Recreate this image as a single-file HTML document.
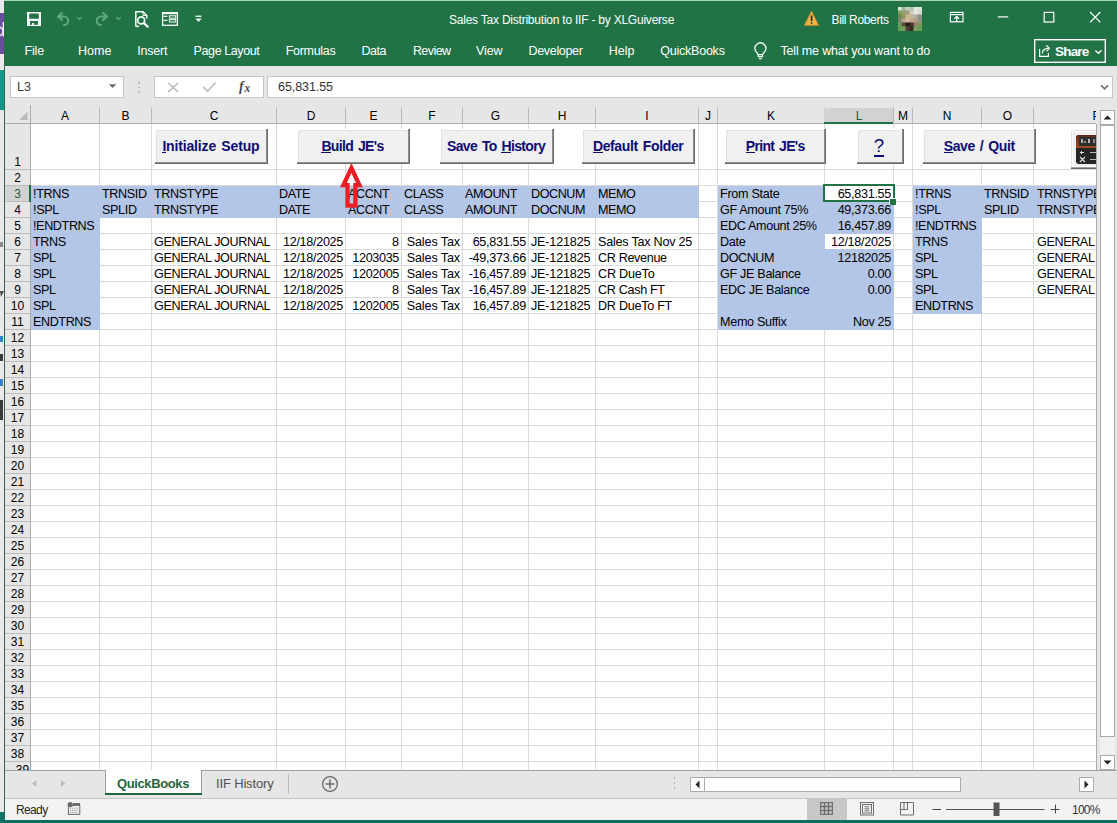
<!DOCTYPE html><html><head><meta charset="utf-8"><style>
html,body{margin:0;padding:0;}
body{width:1117px;height:823px;overflow:hidden;position:relative;background:#e6e6e6;font-family:"Liberation Sans",sans-serif;}
body div, body svg{position:absolute;}
.t{white-space:pre;}
</style></head><body>
<div style="left:0px;top:0px;width:4px;height:823px;background:#e9e9e9;"></div>
<div style="left:0px;top:13px;width:4px;height:41px;background:#6a4f9c;"></div>
<div style="left:0px;top:70px;width:4px;height:40px;background:#12978a;"></div>
<div style="left:0px;top:812px;width:4px;height:11px;background:#0e7566;"></div>
<svg style="left:0;top:13px" width="4" height="41" viewBox="0 13 4 41"><circle cx="-1.2" cy="31.5" r="4.3" fill="none" stroke="#f0ecf6" stroke-width="1.6"/><path d="M3.3 22 V36.5" stroke="#f0ecf6" stroke-width="1.4"/></svg>
<div style="left:0px;top:242px;width:3px;height:5px;background:#8c8c8c;"></div>
<svg style="left:0;top:288px" width="4" height="10" viewBox="0 288 4 10"><path d="M0 291 H4 L1 297 Z" fill="#4a4a4a"/></svg>
<div style="left:0px;top:336px;width:3px;height:6px;background:#3b82c4;"></div>
<div style="left:0px;top:354px;width:3px;height:7px;background:#3a3a3a;"></div>
<div style="left:0px;top:379px;width:3px;height:7px;background:#3b82c4;"></div>
<div style="left:0px;top:400px;width:3px;height:20px;background:#3a3a3a;"></div>
<div style="left:4px;top:0px;width:1113px;height:1px;background:#a9d6b8;"></div>
<div style="left:4px;top:1px;width:1113px;height:65px;background:#217346;"></div>
<div style="left:4px;top:1px;width:1px;height:820px;background:#2d6847;"></div>
<div style="left:5px;top:66px;width:1112px;height:39px;background:#e6e6e6;"></div>
<svg style="left:0;top:0" width="220" height="34" viewBox="0 0 220 34">
<rect x="27" y="12" width="14" height="14" fill="#f4fbf6"/>
<rect x="29.2" y="13.4" width="9.6" height="5.4" rx="0.6" fill="#217346"/>
<rect x="30" y="21" width="8" height="3.8" fill="#217346"/>
<rect x="32" y="23" width="2.1" height="1.8" fill="#f4fbf6"/>
<g fill="none" stroke="#5ea97c" stroke-width="2.1" stroke-linecap="round" stroke-linejoin="round">
<path d="M58 16.5 L62 13 M58 16.5 L62 20 M58 16.5 H64 A4.2 4.2 0 0 1 64 25"/>
<path d="M77.5 17.5 L79.5 19.5 L81.5 17.5" stroke-width="1.1"/>
<path d="M107 16.5 L103 13 M107 16.5 L103 20 M107 16.5 H101 A4.2 4.2 0 0 0 101 25"/>
<path d="M116.5 17.5 L118.5 19.5 L120.5 17.5" stroke-width="1.1"/>
</g>
<g fill="none" stroke="#f4fbf6" stroke-width="1.3">
<path d="M135.8 26.4 V11.7 H143 L146.8 15.5 V18.6" stroke-width="1.5"/>
<path d="M143 11.7 V15.5 H146.8" stroke-width="1"/>
<circle cx="141.2" cy="20.4" r="3.5" stroke-width="1.7"/>
<path d="M135.8 26.4 H139" stroke-width="1.5"/>
<path d="M143.8 23 L147.6 26.6" stroke-width="2.4" stroke-linecap="round"/>
<rect x="162.6" y="12.7" width="14.8" height="12.6"/>
<path d="M163.5 16.3 H167.4 M163.5 20.4 H167.4" stroke-width="1.2"/>
<rect x="169.4" y="15.8" width="6.3" height="2.4" stroke-width="1"/>
<rect x="169.4" y="19.6" width="6.3" height="2.4" stroke-width="1"/>
</g>
<rect x="162" y="12" width="16" height="2.2" fill="#f4fbf6"/>
<rect x="195.5" y="15.6" width="6" height="1.3" fill="#f4fbf6"/>
<path d="M195.3 18.6 H201.7 L198.5 22 Z" fill="#f4fbf6"/>
</svg>
<div class="t" style="left:449.00px;top:13.84px;font-size:12px;line-height:12px;color:#ffffff;white-space:pre;letter-spacing:-0.225px;">Sales Tax Distribution to IIF - by XLGuiverse</div>
<div class="t" style="left:831.50px;top:13.84px;font-size:12px;line-height:12px;color:#ffffff;white-space:pre;letter-spacing:-0.347px;">Bill Roberts</div>
<svg style="left:800px;top:8px" width="24" height="22" viewBox="800 8 24 22">
<path d="M811.5 11.3 L818.6 25.3 H804.4 Z" fill="#f0b442" stroke="#c98a2c" stroke-width="1" stroke-linejoin="round"/>
<rect x="810.8" y="15.5" width="1.5" height="5.5" fill="#1a1a1a"/>
<rect x="810.8" y="22.2" width="1.5" height="1.5" fill="#1a1a1a"/>
</svg>
<svg style="left:898px;top:7px" width="24" height="24" viewBox="0 0 24 24"><defs><filter id="avb"><feGaussianBlur stdDeviation="0.7"/></filter></defs><g filter="url(#avb)"><rect x="-0.5" y="-0.5" width="5" height="5" fill="#d8e6d8"/><rect x="3.5" y="-0.5" width="5" height="5" fill="#a4b49a"/><rect x="7.5" y="-0.5" width="5" height="5" fill="#c8d0c0"/><rect x="11.5" y="-0.5" width="5" height="5" fill="#b8c0b0"/><rect x="15.5" y="-0.5" width="5" height="5" fill="#e0e8e0"/><rect x="19.5" y="-0.5" width="5" height="5" fill="#dce4dc"/><rect x="-0.5" y="3.5" width="5" height="5" fill="#7a9a60"/><rect x="3.5" y="3.5" width="5" height="5" fill="#90a070"/><rect x="7.5" y="3.5" width="5" height="5" fill="#a89878"/><rect x="11.5" y="3.5" width="5" height="5" fill="#c8ccc0"/><rect x="15.5" y="3.5" width="5" height="5" fill="#e4e8e0"/><rect x="19.5" y="3.5" width="5" height="5" fill="#d4dcd4"/><rect x="-0.5" y="7.5" width="5" height="5" fill="#6a8a50"/><rect x="3.5" y="7.5" width="5" height="5" fill="#8a9a60"/><rect x="7.5" y="7.5" width="5" height="5" fill="#c8b890"/><rect x="11.5" y="7.5" width="5" height="5" fill="#c4b494"/><rect x="15.5" y="7.5" width="5" height="5" fill="#b4aca4"/><rect x="19.5" y="7.5" width="5" height="5" fill="#8c9484"/><rect x="-0.5" y="11.5" width="5" height="5" fill="#788078"/><rect x="3.5" y="11.5" width="5" height="5" fill="#b8a088"/><rect x="7.5" y="11.5" width="5" height="5" fill="#d0b898"/><rect x="11.5" y="11.5" width="5" height="5" fill="#c0a890"/><rect x="15.5" y="11.5" width="5" height="5" fill="#b89888"/><rect x="19.5" y="11.5" width="5" height="5" fill="#909088"/><rect x="-0.5" y="15.5" width="5" height="5" fill="#70a060"/><rect x="3.5" y="15.5" width="5" height="5" fill="#5c4c3c"/><rect x="7.5" y="15.5" width="5" height="5" fill="#281c14"/><rect x="11.5" y="15.5" width="5" height="5" fill="#403020"/><rect x="15.5" y="15.5" width="5" height="5" fill="#a07870"/><rect x="19.5" y="15.5" width="5" height="5" fill="#70a050"/><rect x="-0.5" y="19.5" width="5" height="5" fill="#60a050"/><rect x="3.5" y="19.5" width="5" height="5" fill="#70a060"/><rect x="7.5" y="19.5" width="5" height="5" fill="#504030"/><rect x="11.5" y="19.5" width="5" height="5" fill="#342a22"/><rect x="15.5" y="19.5" width="5" height="5" fill="#80a060"/><rect x="19.5" y="19.5" width="5" height="5" fill="#60a050"/></g></svg>
<svg style="left:940px;top:0" width="177" height="34" viewBox="940 0 177 34">
<g fill="none" stroke="#ffffff" stroke-width="1.2">
<rect x="950.4" y="12.4" width="12.6" height="9.4"/>
<path d="M950.4 14.6 H963"/>
<path d="M956.7 22 V16.6 M954.3 18.8 L956.7 16.4 L959.1 18.8"/>
<path d="M997.8 16.9 H1008.2"/>
<rect x="1044.2" y="12.4" width="9.6" height="9.6"/>
<path d="M1090 12 L1100.4 22.4 M1100.4 12 L1090 22.4"/>
</g>
</svg>
<div class="t" style="left:24.60px;top:45.42px;font-size:12.5px;line-height:12.5px;color:#ffffff;white-space:pre;letter-spacing:-0.214px;">File</div>
<div class="t" style="left:77.90px;top:45.42px;font-size:12.5px;line-height:12.5px;color:#ffffff;white-space:pre;letter-spacing:0.039px;">Home</div>
<div class="t" style="left:137.30px;top:45.42px;font-size:12.5px;line-height:12.5px;color:#ffffff;white-space:pre;letter-spacing:-0.225px;">Insert</div>
<div class="t" style="left:193.60px;top:45.42px;font-size:12.5px;line-height:12.5px;color:#ffffff;white-space:pre;letter-spacing:-0.400px;">Page Layout</div>
<div class="t" style="left:285.80px;top:45.42px;font-size:12.5px;line-height:12.5px;color:#ffffff;white-space:pre;letter-spacing:-0.312px;">Formulas</div>
<div class="t" style="left:361.60px;top:45.42px;font-size:12.5px;line-height:12.5px;color:#ffffff;white-space:pre;letter-spacing:-0.502px;">Data</div>
<div class="t" style="left:412.90px;top:45.42px;font-size:12.5px;line-height:12.5px;color:#ffffff;white-space:pre;letter-spacing:-0.550px;">Review</div>
<div class="t" style="left:476.10px;top:45.42px;font-size:12.5px;line-height:12.5px;color:#ffffff;white-space:pre;letter-spacing:-0.173px;">View</div>
<div class="t" style="left:528.50px;top:45.42px;font-size:12.5px;line-height:12.5px;color:#ffffff;white-space:pre;letter-spacing:-0.320px;">Developer</div>
<div class="t" style="left:608.80px;top:45.42px;font-size:12.5px;line-height:12.5px;color:#ffffff;white-space:pre;letter-spacing:-0.055px;">Help</div>
<div class="t" style="left:660.20px;top:45.42px;font-size:12.5px;line-height:12.5px;color:#ffffff;white-space:pre;letter-spacing:-0.220px;">QuickBooks</div>
<div class="t" style="left:780.50px;top:45.42px;font-size:12.5px;line-height:12.5px;color:#ffffff;white-space:pre;letter-spacing:-0.175px;">Tell me what you want to do</div>
<svg style="left:748px;top:38px" width="24" height="24" viewBox="748 38 24 24">
<g fill="none" stroke="#f2fbf5" stroke-width="1.3">
<path d="M758.3 54.6 L755.8 51.2 A5.4 5.4 0 1 1 765 51.2 L762.5 54.6 Z"/>
<path d="M758.3 54.6 V56.6 H762.5 V54.6"/>
<path d="M759 58.6 H761.8"/>
</g>
</svg>
<svg style="left:1030px;top:36px" width="87" height="30" viewBox="1030 36 87 30">
<rect x="1034.7" y="39.7" width="70.6" height="22.6" fill="none" stroke="#ffffff" stroke-width="1.4"/>
<g fill="none" stroke="#ffffff" stroke-width="1.2">
<path d="M1039.6 49 V56.4 H1048.4 V53"/>
<path d="M1042.3 53.4 C1042.6 50.4 1044.6 48.4 1048 48.3"/>
<path d="M1046.2 45.4 L1049.4 48.3 L1046.4 51.3"/>
<path d="M1095.4 50.4 L1098.4 53.2 L1101.4 50.4" stroke-width="1.4"/>
</g>
</svg>
<div class="t" style="left:1055.00px;top:44.57px;font-size:13.5px;line-height:13.5px;color:#ffffff;white-space:pre;font-weight:bold;letter-spacing:-0.806px;">Share</div>
<div style="left:10px;top:76px;width:114px;height:22px;background:#ffffff;box-sizing:border-box;border:1px solid #c6c6c6;"></div>
<div class="t" style="left:17.00px;top:81.42px;font-size:12.5px;line-height:12.5px;color:#3c3c3c;white-space:pre;letter-spacing:0.047px;">L3</div>
<svg style="left:105px;top:80px" width="16" height="12" viewBox="105 80 16 12"><path d="M108.8 84.2 H116.4 L112.6 88 Z" fill="#707070"/></svg>
<div style="left:138.3px;top:82px;width:1.6px;height:1.6px;background:#ababab;border-radius:1px;"></div>
<div style="left:138.3px;top:86.5px;width:1.6px;height:1.6px;background:#ababab;border-radius:1px;"></div>
<div style="left:138.3px;top:91px;width:1.6px;height:1.6px;background:#ababab;border-radius:1px;"></div>
<div style="left:154px;top:76px;width:110px;height:22px;background:#ffffff;box-sizing:border-box;border:1px solid #c6c6c6;"></div>
<svg style="left:160px;top:78px" width="100" height="18" viewBox="160 78 100 18">
<path d="M168.2 83 L178.2 92 M178.2 83 L168.2 92" stroke="#b9b9b9" stroke-width="1.5" fill="none"/>
<path d="M203.4 87 L207.6 91.2 L215.6 82.6" stroke="#c4c4c4" stroke-width="1.9" fill="none"/>
</svg>
<svg style="left:236px;top:78px" width="20" height="18" viewBox="236 78 20 18"><text x="239" y="90.6" font-family="Liberation Serif" font-style="italic" font-weight="bold" font-size="14" fill="#4a4a4a">f</text><text x="244.6" y="92" font-family="Liberation Serif" font-style="italic" font-weight="bold" font-size="11.5" fill="#4a4a4a">x</text></svg>
<div style="left:267px;top:76px;width:846px;height:22px;background:#ffffff;box-sizing:border-box;border:1px solid #c6c6c6;"></div>
<div class="t" style="left:278.00px;top:81.42px;font-size:12.5px;line-height:12.5px;color:#333333;white-space:pre;letter-spacing:-0.068px;">65,831.55</div>
<svg style="left:1096px;top:80px" width="16" height="14" viewBox="1096 80 16 14"><path d="M1101.2 85.4 L1104.6 88.8 L1108 85.4" stroke="#707070" stroke-width="1.6" fill="none"/></svg>
<div style="left:31px;top:124px;width:1065px;height:646px;background:#ffffff;"></div>
<div style="left:5px;top:105px;width:1091px;height:18px;background:#e6e6e6;"></div>
<div style="left:5px;top:123px;width:1091px;height:1px;background:#ababab;"></div>
<svg style="left:17px;top:110px" width="12" height="12" viewBox="17 110 12 12"><path d="M27.5 111.8 V120 H19.3 Z" fill="#b8b8b8"/></svg>
<div style="left:5px;top:124px;width:25px;height:646px;background:#e6e6e6;"></div>
<div style="left:30px;top:105px;width:1px;height:665px;background:#ababab;"></div>
<div style="left:99px;top:106px;width:1px;height:17px;background:linear-gradient(#e6e6e6,#b8b8b8 16%,#b8b8b8)"></div>
<div style="left:151px;top:106px;width:1px;height:17px;background:linear-gradient(#e6e6e6,#b8b8b8 16%,#b8b8b8)"></div>
<div style="left:276px;top:106px;width:1px;height:17px;background:linear-gradient(#e6e6e6,#b8b8b8 16%,#b8b8b8)"></div>
<div style="left:345px;top:106px;width:1px;height:17px;background:linear-gradient(#e6e6e6,#b8b8b8 16%,#b8b8b8)"></div>
<div style="left:401px;top:106px;width:1px;height:17px;background:linear-gradient(#e6e6e6,#b8b8b8 16%,#b8b8b8)"></div>
<div style="left:462px;top:106px;width:1px;height:17px;background:linear-gradient(#e6e6e6,#b8b8b8 16%,#b8b8b8)"></div>
<div style="left:528px;top:106px;width:1px;height:17px;background:linear-gradient(#e6e6e6,#b8b8b8 16%,#b8b8b8)"></div>
<div style="left:595px;top:106px;width:1px;height:17px;background:linear-gradient(#e6e6e6,#b8b8b8 16%,#b8b8b8)"></div>
<div style="left:698px;top:106px;width:1px;height:17px;background:linear-gradient(#e6e6e6,#b8b8b8 16%,#b8b8b8)"></div>
<div style="left:717px;top:106px;width:1px;height:17px;background:linear-gradient(#e6e6e6,#b8b8b8 16%,#b8b8b8)"></div>
<div style="left:824px;top:106px;width:1px;height:17px;background:linear-gradient(#e6e6e6,#b8b8b8 16%,#b8b8b8)"></div>
<div style="left:893px;top:106px;width:1px;height:17px;background:linear-gradient(#e6e6e6,#b8b8b8 16%,#b8b8b8)"></div>
<div style="left:912px;top:106px;width:1px;height:17px;background:linear-gradient(#e6e6e6,#b8b8b8 16%,#b8b8b8)"></div>
<div style="left:981px;top:106px;width:1px;height:17px;background:linear-gradient(#e6e6e6,#b8b8b8 16%,#b8b8b8)"></div>
<div style="left:1033px;top:106px;width:1px;height:17px;background:linear-gradient(#e6e6e6,#b8b8b8 16%,#b8b8b8)"></div>
<div style="left:824px;top:108px;width:69px;height:15px;background:#d2d2d2;"></div>
<div style="left:824px;top:122px;width:69px;height:2px;background:#217346;"></div>
<div style="left:99px;top:124px;width:1px;height:646px;background:#dadada;"></div>
<div style="left:151px;top:124px;width:1px;height:646px;background:#dadada;"></div>
<div style="left:276px;top:124px;width:1px;height:646px;background:#dadada;"></div>
<div style="left:345px;top:124px;width:1px;height:646px;background:#dadada;"></div>
<div style="left:401px;top:124px;width:1px;height:646px;background:#dadada;"></div>
<div style="left:462px;top:124px;width:1px;height:646px;background:#dadada;"></div>
<div style="left:528px;top:124px;width:1px;height:646px;background:#dadada;"></div>
<div style="left:595px;top:124px;width:1px;height:646px;background:#dadada;"></div>
<div style="left:698px;top:124px;width:1px;height:646px;background:#dadada;"></div>
<div style="left:717px;top:124px;width:1px;height:646px;background:#dadada;"></div>
<div style="left:824px;top:124px;width:1px;height:646px;background:#dadada;"></div>
<div style="left:893px;top:124px;width:1px;height:646px;background:#dadada;"></div>
<div style="left:912px;top:124px;width:1px;height:646px;background:#dadada;"></div>
<div style="left:981px;top:124px;width:1px;height:646px;background:#dadada;"></div>
<div style="left:1033px;top:124px;width:1px;height:646px;background:#dadada;"></div>
<div style="left:31px;top:169px;width:1065px;height:1px;background:#dadada;"></div>
<div style="left:5px;top:169px;width:25px;height:1px;background:#bdbdbd;"></div>
<div style="left:31px;top:185px;width:1065px;height:1px;background:#dadada;"></div>
<div style="left:5px;top:185px;width:25px;height:1px;background:#bdbdbd;"></div>
<div style="left:31px;top:201px;width:1065px;height:1px;background:#dadada;"></div>
<div style="left:5px;top:201px;width:25px;height:1px;background:#bdbdbd;"></div>
<div style="left:31px;top:217px;width:1065px;height:1px;background:#dadada;"></div>
<div style="left:5px;top:217px;width:25px;height:1px;background:#bdbdbd;"></div>
<div style="left:31px;top:233px;width:1065px;height:1px;background:#dadada;"></div>
<div style="left:5px;top:233px;width:25px;height:1px;background:#bdbdbd;"></div>
<div style="left:31px;top:249px;width:1065px;height:1px;background:#dadada;"></div>
<div style="left:5px;top:249px;width:25px;height:1px;background:#bdbdbd;"></div>
<div style="left:31px;top:265px;width:1065px;height:1px;background:#dadada;"></div>
<div style="left:5px;top:265px;width:25px;height:1px;background:#bdbdbd;"></div>
<div style="left:31px;top:281px;width:1065px;height:1px;background:#dadada;"></div>
<div style="left:5px;top:281px;width:25px;height:1px;background:#bdbdbd;"></div>
<div style="left:31px;top:297px;width:1065px;height:1px;background:#dadada;"></div>
<div style="left:5px;top:297px;width:25px;height:1px;background:#bdbdbd;"></div>
<div style="left:31px;top:313px;width:1065px;height:1px;background:#dadada;"></div>
<div style="left:5px;top:313px;width:25px;height:1px;background:#bdbdbd;"></div>
<div style="left:31px;top:329px;width:1065px;height:1px;background:#dadada;"></div>
<div style="left:5px;top:329px;width:25px;height:1px;background:#bdbdbd;"></div>
<div style="left:31px;top:345px;width:1065px;height:1px;background:#dadada;"></div>
<div style="left:5px;top:345px;width:25px;height:1px;background:#bdbdbd;"></div>
<div style="left:31px;top:361px;width:1065px;height:1px;background:#dadada;"></div>
<div style="left:5px;top:361px;width:25px;height:1px;background:#bdbdbd;"></div>
<div style="left:31px;top:377px;width:1065px;height:1px;background:#dadada;"></div>
<div style="left:5px;top:377px;width:25px;height:1px;background:#bdbdbd;"></div>
<div style="left:31px;top:393px;width:1065px;height:1px;background:#dadada;"></div>
<div style="left:5px;top:393px;width:25px;height:1px;background:#bdbdbd;"></div>
<div style="left:31px;top:409px;width:1065px;height:1px;background:#dadada;"></div>
<div style="left:5px;top:409px;width:25px;height:1px;background:#bdbdbd;"></div>
<div style="left:31px;top:425px;width:1065px;height:1px;background:#dadada;"></div>
<div style="left:5px;top:425px;width:25px;height:1px;background:#bdbdbd;"></div>
<div style="left:31px;top:441px;width:1065px;height:1px;background:#dadada;"></div>
<div style="left:5px;top:441px;width:25px;height:1px;background:#bdbdbd;"></div>
<div style="left:31px;top:457px;width:1065px;height:1px;background:#dadada;"></div>
<div style="left:5px;top:457px;width:25px;height:1px;background:#bdbdbd;"></div>
<div style="left:31px;top:473px;width:1065px;height:1px;background:#dadada;"></div>
<div style="left:5px;top:473px;width:25px;height:1px;background:#bdbdbd;"></div>
<div style="left:31px;top:489px;width:1065px;height:1px;background:#dadada;"></div>
<div style="left:5px;top:489px;width:25px;height:1px;background:#bdbdbd;"></div>
<div style="left:31px;top:505px;width:1065px;height:1px;background:#dadada;"></div>
<div style="left:5px;top:505px;width:25px;height:1px;background:#bdbdbd;"></div>
<div style="left:31px;top:521px;width:1065px;height:1px;background:#dadada;"></div>
<div style="left:5px;top:521px;width:25px;height:1px;background:#bdbdbd;"></div>
<div style="left:31px;top:537px;width:1065px;height:1px;background:#dadada;"></div>
<div style="left:5px;top:537px;width:25px;height:1px;background:#bdbdbd;"></div>
<div style="left:31px;top:553px;width:1065px;height:1px;background:#dadada;"></div>
<div style="left:5px;top:553px;width:25px;height:1px;background:#bdbdbd;"></div>
<div style="left:31px;top:569px;width:1065px;height:1px;background:#dadada;"></div>
<div style="left:5px;top:569px;width:25px;height:1px;background:#bdbdbd;"></div>
<div style="left:31px;top:585px;width:1065px;height:1px;background:#dadada;"></div>
<div style="left:5px;top:585px;width:25px;height:1px;background:#bdbdbd;"></div>
<div style="left:31px;top:601px;width:1065px;height:1px;background:#dadada;"></div>
<div style="left:5px;top:601px;width:25px;height:1px;background:#bdbdbd;"></div>
<div style="left:31px;top:617px;width:1065px;height:1px;background:#dadada;"></div>
<div style="left:5px;top:617px;width:25px;height:1px;background:#bdbdbd;"></div>
<div style="left:31px;top:633px;width:1065px;height:1px;background:#dadada;"></div>
<div style="left:5px;top:633px;width:25px;height:1px;background:#bdbdbd;"></div>
<div style="left:31px;top:649px;width:1065px;height:1px;background:#dadada;"></div>
<div style="left:5px;top:649px;width:25px;height:1px;background:#bdbdbd;"></div>
<div style="left:31px;top:665px;width:1065px;height:1px;background:#dadada;"></div>
<div style="left:5px;top:665px;width:25px;height:1px;background:#bdbdbd;"></div>
<div style="left:31px;top:681px;width:1065px;height:1px;background:#dadada;"></div>
<div style="left:5px;top:681px;width:25px;height:1px;background:#bdbdbd;"></div>
<div style="left:31px;top:697px;width:1065px;height:1px;background:#dadada;"></div>
<div style="left:5px;top:697px;width:25px;height:1px;background:#bdbdbd;"></div>
<div style="left:31px;top:713px;width:1065px;height:1px;background:#dadada;"></div>
<div style="left:5px;top:713px;width:25px;height:1px;background:#bdbdbd;"></div>
<div style="left:31px;top:729px;width:1065px;height:1px;background:#dadada;"></div>
<div style="left:5px;top:729px;width:25px;height:1px;background:#bdbdbd;"></div>
<div style="left:31px;top:745px;width:1065px;height:1px;background:#dadada;"></div>
<div style="left:5px;top:745px;width:25px;height:1px;background:#bdbdbd;"></div>
<div style="left:31px;top:761px;width:1065px;height:1px;background:#dadada;"></div>
<div style="left:5px;top:761px;width:25px;height:1px;background:#bdbdbd;"></div>
<div style="left:1096px;top:124px;width:1px;height:647px;background:#ababab;"></div>
<div style="left:1097px;top:105px;width:20px;height:666px;background:#e6e6e6;"></div>
<div class="t" style="left:61.00px;top:109.84px;font-size:12px;line-height:12px;color:#000;white-space:pre;">A</div>
<div class="t" style="left:121.50px;top:109.84px;font-size:12px;line-height:12px;color:#000;white-space:pre;">B</div>
<div class="t" style="left:209.66px;top:109.84px;font-size:12px;line-height:12px;color:#000;white-space:pre;">C</div>
<div class="t" style="left:306.66px;top:109.84px;font-size:12px;line-height:12px;color:#000;white-space:pre;">D</div>
<div class="t" style="left:369.50px;top:109.84px;font-size:12px;line-height:12px;color:#000;white-space:pre;">E</div>
<div class="t" style="left:428.34px;top:109.84px;font-size:12px;line-height:12px;color:#000;white-space:pre;">F</div>
<div class="t" style="left:490.84px;top:109.84px;font-size:12px;line-height:12px;color:#000;white-space:pre;">G</div>
<div class="t" style="left:557.66px;top:109.84px;font-size:12px;line-height:12px;color:#000;white-space:pre;">H</div>
<div class="t" style="left:645.34px;top:109.84px;font-size:12px;line-height:12px;color:#000;white-space:pre;">I</div>
<div class="t" style="left:705.00px;top:109.84px;font-size:12px;line-height:12px;color:#000;white-space:pre;">J</div>
<div class="t" style="left:767.00px;top:109.84px;font-size:12px;line-height:12px;color:#000;white-space:pre;">K</div>
<div class="t" style="left:855.66px;top:109.84px;font-size:12px;line-height:12px;color:#1d5c3a;white-space:pre;">L</div>
<div class="t" style="left:898.00px;top:109.84px;font-size:12px;line-height:12px;color:#000;white-space:pre;">M</div>
<div class="t" style="left:942.66px;top:109.84px;font-size:12px;line-height:12px;color:#000;white-space:pre;">N</div>
<div class="t" style="left:1002.84px;top:109.84px;font-size:12px;line-height:12px;color:#000;white-space:pre;">O</div>
<div style="left:1034px;top:105px;width:62px;height:18px;overflow:hidden"><div class="t" style="left:58.50px;top:4.84px;font-size:12px;line-height:12px;color:#000">P</div></div>
<div class="t" style="left:14.16px;top:155.84px;font-size:12px;line-height:12px;color:#000;white-space:pre;">1</div>
<div class="t" style="left:14.16px;top:171.84px;font-size:12px;line-height:12px;color:#000;white-space:pre;">2</div>
<div style="left:5px;top:186px;width:24px;height:15px;background:#d2d2d2;"></div>
<div style="left:29px;top:185px;width:2px;height:17px;background:#1f6b43;"></div>
<div class="t" style="left:14.16px;top:187.84px;font-size:12px;line-height:12px;color:#1d5c3a;white-space:pre;">3</div>
<div class="t" style="left:14.16px;top:203.84px;font-size:12px;line-height:12px;color:#000;white-space:pre;">4</div>
<div class="t" style="left:14.16px;top:219.84px;font-size:12px;line-height:12px;color:#000;white-space:pre;">5</div>
<div class="t" style="left:14.16px;top:235.84px;font-size:12px;line-height:12px;color:#000;white-space:pre;">6</div>
<div class="t" style="left:14.16px;top:251.84px;font-size:12px;line-height:12px;color:#000;white-space:pre;">7</div>
<div class="t" style="left:14.16px;top:267.84px;font-size:12px;line-height:12px;color:#000;white-space:pre;">8</div>
<div class="t" style="left:14.16px;top:283.84px;font-size:12px;line-height:12px;color:#000;white-space:pre;">9</div>
<div class="t" style="left:10.83px;top:299.84px;font-size:12px;line-height:12px;color:#000;white-space:pre;">10</div>
<div class="t" style="left:11.27px;top:315.84px;font-size:12px;line-height:12px;color:#000;white-space:pre;">11</div>
<div class="t" style="left:10.83px;top:331.84px;font-size:12px;line-height:12px;color:#000;white-space:pre;">12</div>
<div class="t" style="left:10.83px;top:347.84px;font-size:12px;line-height:12px;color:#000;white-space:pre;">13</div>
<div class="t" style="left:10.83px;top:363.84px;font-size:12px;line-height:12px;color:#000;white-space:pre;">14</div>
<div class="t" style="left:10.83px;top:379.84px;font-size:12px;line-height:12px;color:#000;white-space:pre;">15</div>
<div class="t" style="left:10.83px;top:395.84px;font-size:12px;line-height:12px;color:#000;white-space:pre;">16</div>
<div class="t" style="left:10.83px;top:411.84px;font-size:12px;line-height:12px;color:#000;white-space:pre;">17</div>
<div class="t" style="left:10.83px;top:427.84px;font-size:12px;line-height:12px;color:#000;white-space:pre;">18</div>
<div class="t" style="left:10.83px;top:443.84px;font-size:12px;line-height:12px;color:#000;white-space:pre;">19</div>
<div class="t" style="left:10.83px;top:459.84px;font-size:12px;line-height:12px;color:#000;white-space:pre;">20</div>
<div class="t" style="left:10.83px;top:475.84px;font-size:12px;line-height:12px;color:#000;white-space:pre;">21</div>
<div class="t" style="left:10.83px;top:491.84px;font-size:12px;line-height:12px;color:#000;white-space:pre;">22</div>
<div class="t" style="left:10.83px;top:507.84px;font-size:12px;line-height:12px;color:#000;white-space:pre;">23</div>
<div class="t" style="left:10.83px;top:523.84px;font-size:12px;line-height:12px;color:#000;white-space:pre;">24</div>
<div class="t" style="left:10.83px;top:539.84px;font-size:12px;line-height:12px;color:#000;white-space:pre;">25</div>
<div class="t" style="left:10.83px;top:555.84px;font-size:12px;line-height:12px;color:#000;white-space:pre;">26</div>
<div class="t" style="left:10.83px;top:571.84px;font-size:12px;line-height:12px;color:#000;white-space:pre;">27</div>
<div class="t" style="left:10.83px;top:587.84px;font-size:12px;line-height:12px;color:#000;white-space:pre;">28</div>
<div class="t" style="left:10.83px;top:603.84px;font-size:12px;line-height:12px;color:#000;white-space:pre;">29</div>
<div class="t" style="left:10.83px;top:619.84px;font-size:12px;line-height:12px;color:#000;white-space:pre;">30</div>
<div class="t" style="left:10.83px;top:635.84px;font-size:12px;line-height:12px;color:#000;white-space:pre;">31</div>
<div class="t" style="left:10.83px;top:651.84px;font-size:12px;line-height:12px;color:#000;white-space:pre;">32</div>
<div class="t" style="left:10.83px;top:667.84px;font-size:12px;line-height:12px;color:#000;white-space:pre;">33</div>
<div class="t" style="left:10.83px;top:683.84px;font-size:12px;line-height:12px;color:#000;white-space:pre;">34</div>
<div class="t" style="left:10.83px;top:699.84px;font-size:12px;line-height:12px;color:#000;white-space:pre;">35</div>
<div class="t" style="left:10.83px;top:715.84px;font-size:12px;line-height:12px;color:#000;white-space:pre;">36</div>
<div class="t" style="left:10.83px;top:731.84px;font-size:12px;line-height:12px;color:#000;white-space:pre;">37</div>
<div class="t" style="left:10.83px;top:747.84px;font-size:12px;line-height:12px;color:#000;white-space:pre;">38</div>
<div style="left:5px;top:762px;width:25px;height:8px;overflow:hidden"><div class="t" style="left:10.83px;top:1.84px;font-size:12px;line-height:12px;color:#000">39</div></div>
<div style="left:31px;top:186px;width:69px;height:144px;background:#b4c6e7;"></div>
<div style="left:100px;top:186px;width:599px;height:32px;background:#b4c6e7;"></div>
<div style="left:718px;top:186px;width:176px;height:144px;background:#b4c6e7;"></div>
<div style="left:913px;top:186px;width:69px;height:128px;background:#b4c6e7;"></div>
<div style="left:982px;top:186px;width:115px;height:32px;background:#b4c6e7;"></div>
<div style="left:825px;top:186px;width:68px;height:14px;background:#ffffff;"></div>
<div style="left:825px;top:234px;width:68px;height:15px;background:#ffffff;"></div>
<div style="left:893px;top:234px;width:1px;height:15px;background:#dadada;"></div>
<div class="t" style="left:33.00px;top:187.93px;font-size:12.6px;line-height:12.6px;color:#000;white-space:pre;letter-spacing:-0.356px;">!TRNS</div>
<div class="t" style="left:102.00px;top:187.93px;font-size:12.6px;line-height:12.6px;color:#000;white-space:pre;letter-spacing:-0.367px;">TRNSID</div>
<div class="t" style="left:154.00px;top:187.93px;font-size:12.6px;line-height:12.6px;color:#000;white-space:pre;letter-spacing:-0.398px;">TRNSTYPE</div>
<div class="t" style="left:279.00px;top:187.93px;font-size:12.6px;line-height:12.6px;color:#000;white-space:pre;letter-spacing:-0.387px;">DATE</div>
<div class="t" style="left:348.00px;top:187.93px;font-size:12.6px;line-height:12.6px;color:#000;white-space:pre;letter-spacing:-0.406px;">ACCNT</div>
<div class="t" style="left:404.00px;top:187.93px;font-size:12.6px;line-height:12.6px;color:#000;white-space:pre;letter-spacing:-0.394px;">CLASS</div>
<div class="t" style="left:465.00px;top:187.93px;font-size:12.6px;line-height:12.6px;color:#000;white-space:pre;letter-spacing:-0.427px;">AMOUNT</div>
<div class="t" style="left:531.00px;top:187.93px;font-size:12.6px;line-height:12.6px;color:#000;white-space:pre;letter-spacing:-0.440px;">DOCNUM</div>
<div class="t" style="left:598.00px;top:187.93px;font-size:12.6px;line-height:12.6px;color:#000;white-space:pre;letter-spacing:-0.461px;">MEMO</div>
<div class="t" style="left:33.00px;top:203.93px;font-size:12.6px;line-height:12.6px;color:#000;white-space:pre;letter-spacing:-0.328px;">!SPL</div>
<div class="t" style="left:102.00px;top:203.93px;font-size:12.6px;line-height:12.6px;color:#000;white-space:pre;letter-spacing:-0.347px;">SPLID</div>
<div class="t" style="left:154.00px;top:203.93px;font-size:12.6px;line-height:12.6px;color:#000;white-space:pre;letter-spacing:-0.398px;">TRNSTYPE</div>
<div class="t" style="left:279.00px;top:203.93px;font-size:12.6px;line-height:12.6px;color:#000;white-space:pre;letter-spacing:-0.387px;">DATE</div>
<div class="t" style="left:348.00px;top:203.93px;font-size:12.6px;line-height:12.6px;color:#000;white-space:pre;letter-spacing:-0.406px;">ACCNT</div>
<div class="t" style="left:404.00px;top:203.93px;font-size:12.6px;line-height:12.6px;color:#000;white-space:pre;letter-spacing:-0.394px;">CLASS</div>
<div class="t" style="left:465.00px;top:203.93px;font-size:12.6px;line-height:12.6px;color:#000;white-space:pre;letter-spacing:-0.427px;">AMOUNT</div>
<div class="t" style="left:531.00px;top:203.93px;font-size:12.6px;line-height:12.6px;color:#000;white-space:pre;letter-spacing:-0.440px;">DOCNUM</div>
<div class="t" style="left:598.00px;top:203.93px;font-size:12.6px;line-height:12.6px;color:#000;white-space:pre;letter-spacing:-0.461px;">MEMO</div>
<div class="t" style="left:33.00px;top:219.93px;font-size:12.6px;line-height:12.6px;color:#000;white-space:pre;letter-spacing:-0.379px;">!ENDTRNS</div>
<div class="t" style="left:33.00px;top:235.93px;font-size:12.6px;line-height:12.6px;color:#000;white-space:pre;letter-spacing:-0.402px;">TRNS</div>
<div class="t" style="left:154.00px;top:235.93px;font-size:12.6px;line-height:12.6px;color:#000;white-space:pre;letter-spacing:-0.384px;">GENERAL JOURNAL</div>
<div class="t" style="left:282.97px;top:235.93px;font-size:12.6px;line-height:12.6px;color:#000;white-space:pre;letter-spacing:-0.297px;">12/18/2025</div>
<div class="t" style="left:392.00px;top:235.93px;font-size:12.6px;line-height:12.6px;color:#000;white-space:pre;">8</div>
<div class="t" style="left:406.70px;top:235.93px;font-size:12.6px;line-height:12.6px;color:#000;white-space:pre;letter-spacing:-0.118px;">Sales Tax</div>
<div class="t" style="left:472.64px;top:235.93px;font-size:12.6px;line-height:12.6px;color:#000;white-space:pre;letter-spacing:-0.293px;">65,831.55</div>
<div class="t" style="left:531.00px;top:235.93px;font-size:12.6px;line-height:12.6px;color:#000;white-space:pre;letter-spacing:-0.177px;">JE-121825</div>
<div class="t" style="left:598.00px;top:235.93px;font-size:12.6px;line-height:12.6px;color:#000;white-space:pre;letter-spacing:-0.228px;">Sales Tax Nov 25</div>
<div class="t" style="left:33.00px;top:251.93px;font-size:12.6px;line-height:12.6px;color:#000;white-space:pre;letter-spacing:-0.380px;">SPL</div>
<div class="t" style="left:154.00px;top:251.93px;font-size:12.6px;line-height:12.6px;color:#000;white-space:pre;letter-spacing:-0.384px;">GENERAL JOURNAL</div>
<div class="t" style="left:282.97px;top:251.93px;font-size:12.6px;line-height:12.6px;color:#000;white-space:pre;letter-spacing:-0.297px;">12/18/2025</div>
<div class="t" style="left:352.30px;top:251.93px;font-size:12.6px;line-height:12.6px;color:#000;white-space:pre;letter-spacing:-0.328px;">1203035</div>
<div class="t" style="left:406.70px;top:251.93px;font-size:12.6px;line-height:12.6px;color:#000;white-space:pre;letter-spacing:-0.118px;">Sales Tax</div>
<div class="t" style="left:468.64px;top:251.93px;font-size:12.6px;line-height:12.6px;color:#000;white-space:pre;letter-spacing:-0.283px;">-49,373.66</div>
<div class="t" style="left:531.00px;top:251.93px;font-size:12.6px;line-height:12.6px;color:#000;white-space:pre;letter-spacing:-0.177px;">JE-121825</div>
<div class="t" style="left:598.00px;top:251.93px;font-size:12.6px;line-height:12.6px;color:#000;white-space:pre;letter-spacing:-0.338px;">CR Revenue</div>
<div class="t" style="left:33.00px;top:267.93px;font-size:12.6px;line-height:12.6px;color:#000;white-space:pre;letter-spacing:-0.380px;">SPL</div>
<div class="t" style="left:154.00px;top:267.93px;font-size:12.6px;line-height:12.6px;color:#000;white-space:pre;letter-spacing:-0.384px;">GENERAL JOURNAL</div>
<div class="t" style="left:282.97px;top:267.93px;font-size:12.6px;line-height:12.6px;color:#000;white-space:pre;letter-spacing:-0.297px;">12/18/2025</div>
<div class="t" style="left:352.30px;top:267.93px;font-size:12.6px;line-height:12.6px;color:#000;white-space:pre;letter-spacing:-0.328px;">1202005</div>
<div class="t" style="left:406.70px;top:267.93px;font-size:12.6px;line-height:12.6px;color:#000;white-space:pre;letter-spacing:-0.118px;">Sales Tax</div>
<div class="t" style="left:468.64px;top:267.93px;font-size:12.6px;line-height:12.6px;color:#000;white-space:pre;letter-spacing:-0.283px;">-16,457.89</div>
<div class="t" style="left:531.00px;top:267.93px;font-size:12.6px;line-height:12.6px;color:#000;white-space:pre;letter-spacing:-0.177px;">JE-121825</div>
<div class="t" style="left:598.00px;top:267.93px;font-size:12.6px;line-height:12.6px;color:#000;white-space:pre;letter-spacing:-0.197px;">CR DueTo</div>
<div class="t" style="left:33.00px;top:283.93px;font-size:12.6px;line-height:12.6px;color:#000;white-space:pre;letter-spacing:-0.380px;">SPL</div>
<div class="t" style="left:154.00px;top:283.93px;font-size:12.6px;line-height:12.6px;color:#000;white-space:pre;letter-spacing:-0.384px;">GENERAL JOURNAL</div>
<div class="t" style="left:282.97px;top:283.93px;font-size:12.6px;line-height:12.6px;color:#000;white-space:pre;letter-spacing:-0.297px;">12/18/2025</div>
<div class="t" style="left:392.00px;top:283.93px;font-size:12.6px;line-height:12.6px;color:#000;white-space:pre;">8</div>
<div class="t" style="left:406.70px;top:283.93px;font-size:12.6px;line-height:12.6px;color:#000;white-space:pre;letter-spacing:-0.118px;">Sales Tax</div>
<div class="t" style="left:468.64px;top:283.93px;font-size:12.6px;line-height:12.6px;color:#000;white-space:pre;letter-spacing:-0.283px;">-16,457.89</div>
<div class="t" style="left:531.00px;top:283.93px;font-size:12.6px;line-height:12.6px;color:#000;white-space:pre;letter-spacing:-0.177px;">JE-121825</div>
<div class="t" style="left:598.00px;top:283.93px;font-size:12.6px;line-height:12.6px;color:#000;white-space:pre;letter-spacing:-0.325px;">CR Cash FT</div>
<div class="t" style="left:33.00px;top:299.93px;font-size:12.6px;line-height:12.6px;color:#000;white-space:pre;letter-spacing:-0.380px;">SPL</div>
<div class="t" style="left:154.00px;top:299.93px;font-size:12.6px;line-height:12.6px;color:#000;white-space:pre;letter-spacing:-0.384px;">GENERAL JOURNAL</div>
<div class="t" style="left:282.97px;top:299.93px;font-size:12.6px;line-height:12.6px;color:#000;white-space:pre;letter-spacing:-0.297px;">12/18/2025</div>
<div class="t" style="left:352.30px;top:299.93px;font-size:12.6px;line-height:12.6px;color:#000;white-space:pre;letter-spacing:-0.328px;">1202005</div>
<div class="t" style="left:406.70px;top:299.93px;font-size:12.6px;line-height:12.6px;color:#000;white-space:pre;letter-spacing:-0.118px;">Sales Tax</div>
<div class="t" style="left:472.64px;top:299.93px;font-size:12.6px;line-height:12.6px;color:#000;white-space:pre;letter-spacing:-0.293px;">16,457.89</div>
<div class="t" style="left:531.00px;top:299.93px;font-size:12.6px;line-height:12.6px;color:#000;white-space:pre;letter-spacing:-0.177px;">JE-121825</div>
<div class="t" style="left:598.00px;top:299.93px;font-size:12.6px;line-height:12.6px;color:#000;white-space:pre;letter-spacing:-0.268px;">DR DueTo FT</div>
<div class="t" style="left:33.00px;top:315.93px;font-size:12.6px;line-height:12.6px;color:#000;white-space:pre;letter-spacing:-0.408px;">ENDTRNS</div>
<div class="t" style="left:720.00px;top:187.93px;font-size:12.6px;line-height:12.6px;color:#000;white-space:pre;letter-spacing:-0.294px;">From State</div>
<div class="t" style="left:837.64px;top:187.93px;font-size:12.6px;line-height:12.6px;color:#000;white-space:pre;letter-spacing:-0.293px;">65,831.55</div>
<div class="t" style="left:720.00px;top:203.93px;font-size:12.6px;line-height:12.6px;color:#000;white-space:pre;letter-spacing:-0.337px;">GF Amount 75%</div>
<div class="t" style="left:837.64px;top:203.93px;font-size:12.6px;line-height:12.6px;color:#000;white-space:pre;letter-spacing:-0.293px;">49,373.66</div>
<div class="t" style="left:720.00px;top:219.93px;font-size:12.6px;line-height:12.6px;color:#000;white-space:pre;letter-spacing:-0.343px;">EDC Amount 25%</div>
<div class="t" style="left:837.64px;top:219.93px;font-size:12.6px;line-height:12.6px;color:#000;white-space:pre;letter-spacing:-0.293px;">16,457.89</div>
<div class="t" style="left:720.00px;top:235.93px;font-size:12.6px;line-height:12.6px;color:#000;white-space:pre;letter-spacing:-0.312px;">Date</div>
<div class="t" style="left:830.97px;top:235.93px;font-size:12.6px;line-height:12.6px;color:#000;white-space:pre;letter-spacing:-0.297px;">12/18/2025</div>
<div class="t" style="left:720.00px;top:251.93px;font-size:12.6px;line-height:12.6px;color:#000;white-space:pre;letter-spacing:-0.440px;">DOCNUM</div>
<div class="t" style="left:837.62px;top:251.93px;font-size:12.6px;line-height:12.6px;color:#000;white-space:pre;letter-spacing:-0.328px;">12182025</div>
<div class="t" style="left:720.00px;top:267.93px;font-size:12.6px;line-height:12.6px;color:#000;white-space:pre;letter-spacing:-0.309px;">GF JE Balance</div>
<div class="t" style="left:867.66px;top:267.93px;font-size:12.6px;line-height:12.6px;color:#000;white-space:pre;letter-spacing:-0.289px;">0.00</div>
<div class="t" style="left:720.00px;top:283.93px;font-size:12.6px;line-height:12.6px;color:#000;white-space:pre;letter-spacing:-0.317px;">EDC JE Balance</div>
<div class="t" style="left:867.66px;top:283.93px;font-size:12.6px;line-height:12.6px;color:#000;white-space:pre;letter-spacing:-0.289px;">0.00</div>
<div class="t" style="left:720.00px;top:315.93px;font-size:12.6px;line-height:12.6px;color:#000;white-space:pre;letter-spacing:-0.298px;">Memo Suffix</div>
<div class="t" style="left:852.98px;top:315.93px;font-size:12.6px;line-height:12.6px;color:#000;white-space:pre;letter-spacing:-0.312px;">Nov 25</div>
<div class="t" style="left:915.00px;top:187.93px;font-size:12.6px;line-height:12.6px;color:#000;white-space:pre;letter-spacing:-0.356px;">!TRNS</div>
<div class="t" style="left:915.00px;top:203.93px;font-size:12.6px;line-height:12.6px;color:#000;white-space:pre;letter-spacing:-0.328px;">!SPL</div>
<div class="t" style="left:915.00px;top:219.93px;font-size:12.6px;line-height:12.6px;color:#000;white-space:pre;letter-spacing:-0.379px;">!ENDTRNS</div>
<div class="t" style="left:915.00px;top:235.93px;font-size:12.6px;line-height:12.6px;color:#000;white-space:pre;letter-spacing:-0.402px;">TRNS</div>
<div class="t" style="left:915.00px;top:251.93px;font-size:12.6px;line-height:12.6px;color:#000;white-space:pre;letter-spacing:-0.380px;">SPL</div>
<div class="t" style="left:915.00px;top:267.93px;font-size:12.6px;line-height:12.6px;color:#000;white-space:pre;letter-spacing:-0.380px;">SPL</div>
<div class="t" style="left:915.00px;top:283.93px;font-size:12.6px;line-height:12.6px;color:#000;white-space:pre;letter-spacing:-0.380px;">SPL</div>
<div class="t" style="left:915.00px;top:299.93px;font-size:12.6px;line-height:12.6px;color:#000;white-space:pre;letter-spacing:-0.408px;">ENDTRNS</div>
<div class="t" style="left:984.00px;top:187.93px;font-size:12.6px;line-height:12.6px;color:#000;white-space:pre;letter-spacing:-0.367px;">TRNSID</div>
<div class="t" style="left:984.00px;top:203.93px;font-size:12.6px;line-height:12.6px;color:#000;white-space:pre;letter-spacing:-0.347px;">SPLID</div>
<div style="left:1034px;top:124px;width:62px;height:200px;overflow:hidden">
<div class="t" style="left:3px;top:63.93px;font-size:12.6px;line-height:12.6px;letter-spacing:-0.398px;color:#000">TRNSTYPE</div>
<div class="t" style="left:3px;top:79.93px;font-size:12.6px;line-height:12.6px;letter-spacing:-0.398px;color:#000">TRNSTYPE</div>
<div class="t" style="left:3px;top:111.93px;font-size:12.6px;line-height:12.6px;letter-spacing:-0.384px;color:#000">GENERAL JOURNAL</div>
<div class="t" style="left:3px;top:127.93px;font-size:12.6px;line-height:12.6px;letter-spacing:-0.384px;color:#000">GENERAL JOURNAL</div>
<div class="t" style="left:3px;top:143.93px;font-size:12.6px;line-height:12.6px;letter-spacing:-0.384px;color:#000">GENERAL JOURNAL</div>
<div class="t" style="left:3px;top:159.93px;font-size:12.6px;line-height:12.6px;letter-spacing:-0.384px;color:#000">GENERAL JOURNAL</div>
</div>
<div style="left:823px;top:184px;width:72px;height:18px;box-sizing:border-box;border:2px solid #217346"></div>
<div style="left:889px;top:198px;width:7px;height:7px;background:#ffffff;"></div>
<div style="left:890px;top:199px;width:6px;height:6px;background:#217346;"></div>
<div style="left:155px;top:129px;width:113px;height:35px;background:#6a6a6a;"></div>
<div style="left:155px;top:129px;width:112px;height:34px;background:#8f8f8f;"></div>
<div style="left:155px;top:129px;width:111px;height:33px;background:#ffffff;"></div>
<div style="left:156px;top:130px;width:110px;height:32px;background:#e2e2e2;"></div>
<div style="left:157px;top:131px;width:109px;height:31px;background:#f0f0f0;"></div>
<div class="t" style="left:162.40px;top:139.15px;font-size:14px;line-height:14px;color:#0c0c74;white-space:pre;letter-spacing:-0.162px;word-spacing:1.6px;font-weight:bold;">Initialize Setup</div>
<div style="left:162px;top:152px;width:4px;height:1px;background:#0c0c74;"></div>
<div style="left:297px;top:129px;width:113px;height:35px;background:#6a6a6a;"></div>
<div style="left:297px;top:129px;width:112px;height:34px;background:#8f8f8f;"></div>
<div style="left:297px;top:129px;width:111px;height:33px;background:#ffffff;"></div>
<div style="left:298px;top:130px;width:110px;height:32px;background:#e2e2e2;"></div>
<div style="left:299px;top:131px;width:109px;height:31px;background:#f0f0f0;"></div>
<div class="t" style="left:321.40px;top:139.15px;font-size:14px;line-height:14px;color:#0c0c74;white-space:pre;letter-spacing:-0.651px;word-spacing:1.6px;font-weight:bold;">Build JE's</div>
<div style="left:321px;top:152px;width:10px;height:1px;background:#0c0c74;"></div>
<div style="left:440px;top:129px;width:114px;height:35px;background:#6a6a6a;"></div>
<div style="left:440px;top:129px;width:113px;height:34px;background:#8f8f8f;"></div>
<div style="left:440px;top:129px;width:112px;height:33px;background:#ffffff;"></div>
<div style="left:441px;top:130px;width:111px;height:32px;background:#e2e2e2;"></div>
<div style="left:442px;top:131px;width:110px;height:31px;background:#f0f0f0;"></div>
<div class="t" style="left:447.00px;top:139.15px;font-size:14px;line-height:14px;color:#0c0c74;white-space:pre;letter-spacing:-0.657px;word-spacing:1.6px;font-weight:bold;">Save To History</div>
<div style="left:501px;top:152px;width:10px;height:1px;background:#0c0c74;"></div>
<div style="left:582px;top:129px;width:113px;height:35px;background:#6a6a6a;"></div>
<div style="left:582px;top:129px;width:112px;height:34px;background:#8f8f8f;"></div>
<div style="left:582px;top:129px;width:111px;height:33px;background:#ffffff;"></div>
<div style="left:583px;top:130px;width:110px;height:32px;background:#e2e2e2;"></div>
<div style="left:584px;top:131px;width:109px;height:31px;background:#f0f0f0;"></div>
<div class="t" style="left:592.90px;top:139.15px;font-size:14px;line-height:14px;color:#0c0c74;white-space:pre;letter-spacing:-0.370px;word-spacing:1.6px;font-weight:bold;">Default Folder</div>
<div style="left:593px;top:152px;width:10px;height:1px;background:#0c0c74;"></div>
<div style="left:725px;top:129px;width:101px;height:35px;background:#6a6a6a;"></div>
<div style="left:725px;top:129px;width:100px;height:34px;background:#8f8f8f;"></div>
<div style="left:725px;top:129px;width:99px;height:33px;background:#ffffff;"></div>
<div style="left:726px;top:130px;width:98px;height:32px;background:#e2e2e2;"></div>
<div style="left:727px;top:131px;width:97px;height:31px;background:#f0f0f0;"></div>
<div class="t" style="left:745.80px;top:139.15px;font-size:14px;line-height:14px;color:#0c0c74;white-space:pre;letter-spacing:-0.682px;word-spacing:1.6px;font-weight:bold;">Print JE's</div>
<div style="left:746px;top:152px;width:9px;height:1px;background:#0c0c74;"></div>
<div style="left:857px;top:129px;width:47px;height:35px;background:#6a6a6a;"></div>
<div style="left:857px;top:129px;width:46px;height:34px;background:#8f8f8f;"></div>
<div style="left:857px;top:129px;width:45px;height:33px;background:#ffffff;"></div>
<div style="left:858px;top:130px;width:44px;height:32px;background:#e2e2e2;"></div>
<div style="left:859px;top:131px;width:43px;height:31px;background:#f0f0f0;"></div>
<div class="t" style="left:873.80px;top:137.19px;font-size:18.67px;line-height:18.67px;color:#0c0c74;white-space:pre;letter-spacing:0.000px;word-spacing:1.6px;">?</div>
<div style="left:874px;top:155px;width:10px;height:1.5px;background:#0c0c74;"></div>
<div style="left:923px;top:129px;width:113px;height:35px;background:#6a6a6a;"></div>
<div style="left:923px;top:129px;width:112px;height:34px;background:#8f8f8f;"></div>
<div style="left:923px;top:129px;width:111px;height:33px;background:#ffffff;"></div>
<div style="left:924px;top:130px;width:110px;height:32px;background:#e2e2e2;"></div>
<div style="left:925px;top:131px;width:109px;height:31px;background:#f0f0f0;"></div>
<div class="t" style="left:943.80px;top:139.15px;font-size:14px;line-height:14px;color:#0c0c74;white-space:pre;letter-spacing:-0.431px;word-spacing:1.6px;font-weight:bold;">Save / Quit</div>
<div style="left:944px;top:152px;width:9px;height:1px;background:#0c0c74;"></div>
<div style="left:1071px;top:130px;width:25px;height:40px;overflow:hidden">
<div style="left:0;top:0;width:40px;height:39px;background:#696969"></div>
<div style="left:0;top:0;width:39px;height:38px;background:#a0a0a0"></div>
<div style="left:0;top:0;width:38px;height:37px;background:#e3e3e3"></div>
<div style="left:1px;top:1px;width:37px;height:36px;background:#ffffff"></div>
<div style="left:2px;top:2px;width:35px;height:34px;background:#f0f0f0"></div>
<div style="left:5px;top:5px;width:30px;height:29px;border-radius:3px;background:#262626;overflow:hidden">
 <div style="left:0;top:0;width:30px;height:13px;background:linear-gradient(#5e2a12,#a34d22)"></div>
 <div style="left:3px;top:2px;width:26px;height:9px;background:#2e2e2e"></div>
 <div style="left:5px;top:4px;width:2px;height:4px;background:#a8a8a8"></div>
 <div style="left:8px;top:6px;width:2px;height:2px;background:#7a9a7a"></div>
 <div style="left:12px;top:4px;width:2px;height:4px;background:#b8b8b8"></div>
 <div style="left:17px;top:4px;width:2px;height:4px;background:#8a8a8a"></div>
 <div style="left:4px;top:17px;width:4px;height:1px;background:#dddddd"></div>
 <div style="left:5px;top:16px;width:1px;height:3px;background:#dddddd"></div>
 <svg style="left:3px;top:21px" width="7" height="7" viewBox="0 0 7 7"><path d="M1 1 L6 6 M6 1 L1 6" stroke="#d8d8d8" stroke-width="1.3"/></svg>
 <div style="left:14px;top:17px;width:6px;height:1px;background:#bbbbbb"></div>
 <div style="left:14px;top:24px;width:6px;height:1px;background:#bbbbbb"></div>
</div>
</div>
<svg style="left:330px;top:155px" width="45" height="60" viewBox="330 155 45 60">
<path d="M351.4 168 L359.4 185.2 H355.4 V205.6 H347.5 V185.2 H343.4 Z" fill="none" stroke="#ee1d23" stroke-width="4.3" stroke-linejoin="miter" stroke-miterlimit="6"/>
</svg>
<div style="left:1096px;top:124px;width:1px;height:647px;background:#ababab;"></div>
<div style="left:1097px;top:105px;width:20px;height:666px;background:#e6e6e6;"></div>
<div style="left:1100px;top:110px;width:15px;height:15px;background:#ffffff;box-sizing:border-box;border:1px solid #ababab;"></div>
<svg style="left:1100px;top:110px" width="15" height="15" viewBox="0 0 15 15"><path d="M3.5 9.5 H11.5 L7.5 5.5 Z" fill="#222"/></svg>
<div style="left:1100px;top:125px;width:15px;height:630px;background:#f0f0f0;"></div>
<div style="left:1100px;top:125px;width:15px;height:612px;background:#ffffff;box-sizing:border-box;border:1px solid #ababab;"></div>
<div style="left:1100px;top:755px;width:15px;height:15px;background:#ffffff;box-sizing:border-box;border:1px solid #ababab;"></div>
<svg style="left:1100px;top:755px" width="15" height="15" viewBox="0 0 15 15"><path d="M3.5 5.5 H11.5 L7.5 9.5 Z" fill="#222"/></svg>
<div style="left:5px;top:770px;width:1112px;height:28px;background:#e6e6e6;"></div>
<div style="left:5px;top:770px;width:1112px;height:1px;background:#9f9f9f;"></div>
<div style="left:5px;top:798px;width:1112px;height:1px;background:#c6c6c6;"></div>
<svg style="left:25px;top:775px" width="50" height="16" viewBox="25 775 50 16"><path d="M36.3 780 V787 L32 783.5 Z" fill="#bdbdbd"/><path d="M61 780 V787 L65.3 783.5 Z" fill="#bdbdbd"/></svg>
<div style="left:105px;top:770px;width:97px;height:25px;background:#ffffff;"></div>
<div style="left:105px;top:770px;width:1px;height:25px;background:#9f9f9f;"></div>
<div style="left:201px;top:770px;width:1px;height:25px;background:#9f9f9f;"></div>
<div style="left:105px;top:793px;width:97px;height:2px;background:#1f6541;"></div>
<div class="t" style="left:117.00px;top:776.99px;font-size:13px;line-height:13px;color:#1f6541;white-space:pre;font-weight:bold;letter-spacing:-0.386px;">QuickBooks</div>
<div class="t" style="left:216.00px;top:776.99px;font-size:13px;line-height:13px;color:#505050;white-space:pre;letter-spacing:-0.156px;">IIF History</div>
<div style="left:288px;top:774px;width:1px;height:20px;background:#bdbdbd;"></div>
<svg style="left:318px;top:772px" width="24" height="24" viewBox="318 772 24 24">
<circle cx="330" cy="784" r="7.4" fill="none" stroke="#6a6a6a" stroke-width="1.3"/>
<path d="M330 779.6 V788.4 M325.6 784 H334.4" stroke="#6a6a6a" stroke-width="1.5"/>
</svg>
<div style="left:673.5px;top:777px;width:1.5px;height:1.5px;background:#b0b0b0;"></div>
<div style="left:673.5px;top:782px;width:1.5px;height:1.5px;background:#b0b0b0;"></div>
<div style="left:673.5px;top:787px;width:1.5px;height:1.5px;background:#b0b0b0;"></div>
<div style="left:690px;top:777px;width:15px;height:15px;background:#ffffff;box-sizing:border-box;border:1px solid #ababab;"></div>
<svg style="left:690px;top:777px" width="15" height="15" viewBox="0 0 15 15"><path d="M9.5 3.5 V11.5 L5.5 7.5 Z" fill="#222"/></svg>
<div style="left:704px;top:777px;width:257px;height:15px;background:#ffffff;box-sizing:border-box;border:1px solid #ababab;"></div>
<div style="left:1079px;top:777px;width:15px;height:15px;background:#ffffff;box-sizing:border-box;border:1px solid #ababab;"></div>
<svg style="left:1079px;top:777px" width="15" height="15" viewBox="0 0 15 15"><path d="M5.5 3.5 V11.5 L9.5 7.5 Z" fill="#222"/></svg>
<div style="left:5px;top:799px;width:1112px;height:21px;background:#f3f3f3;"></div>
<div class="t" style="left:16.00px;top:803.84px;font-size:12px;line-height:12px;color:#262626;white-space:pre;letter-spacing:-0.637px;">Ready</div>
<svg style="left:64px;top:799px" width="20" height="20" viewBox="64 799 20 20">
<circle cx="70.2" cy="804.6" r="2.6" fill="#6a6a6a"/>
<rect x="68.4" y="805.4" width="11.4" height="9" fill="none" stroke="#6a6a6a" stroke-width="1"/>
<rect x="73" y="803" width="7" height="2.2" fill="#6a6a6a"/>
<path d="M70 808.2 H78.5 M70 810.4 H78.5 M70 812.6 H78.5" stroke="#8a8a8a" stroke-width="0.9" stroke-dasharray="1.3 0.8"/>
</svg>
<div style="left:807px;top:799px;width:40px;height:21px;background:#c8c8c8;"></div>
<svg style="left:815px;top:799px" width="110" height="20" viewBox="815 799 110 20">
<g fill="#6d6d6d">
<rect x="820" y="802" width="13" height="13"/>
</g>
<g fill="#c8c8c8">
<rect x="821.2" y="803.2" width="2.6" height="2.6"/><rect x="825.2" y="803.2" width="2.6" height="2.6"/><rect x="829.2" y="803.2" width="2.6" height="2.6"/>
<rect x="821.2" y="807.2" width="2.6" height="2.6"/><rect x="825.2" y="807.2" width="2.6" height="2.6"/><rect x="829.2" y="807.2" width="2.6" height="2.6"/>
<rect x="821.2" y="811.2" width="2.6" height="2.6"/><rect x="825.2" y="811.2" width="2.6" height="2.6"/><rect x="829.2" y="811.2" width="2.6" height="2.6"/>
</g>
<g fill="none" stroke="#6d6d6d" stroke-width="1">
<rect x="860.5" y="802.5" width="13" height="12.5"/>
<rect x="862.5" y="804.5" width="9" height="8.5"/>
<path d="M864.5 806.8 H869.5 M864.5 808.8 H869.5 M864.5 810.8 H869.5"/>
<path d="M900.5 802.5 H913.5 V815 H900.5 Z M900.5 809.5 H907.5 V802.5 M904 802.5 V809.5"/>
</g>
</svg>
<svg style="left:925px;top:799px" width="145" height="20" viewBox="925 799 145 20">
<path d="M932.5 809.5 H941" stroke="#444" stroke-width="1"/>
<path d="M946 809.5 H1044.6" stroke="#555" stroke-width="1"/>
<rect x="993.5" y="802.5" width="6" height="13.5" fill="#555"/>
<path d="M1050.6 809.5 H1059.4 M1055.5 804.6 V813.4" stroke="#444" stroke-width="1"/>
</svg>
<div class="t" style="left:1072.00px;top:803.84px;font-size:12px;line-height:12px;color:#333333;white-space:pre;letter-spacing:-0.797px;">100%</div>
<div style="left:4px;top:820px;width:1113px;height:3px;background:#0e6e5f;"></div>
</body></html>
